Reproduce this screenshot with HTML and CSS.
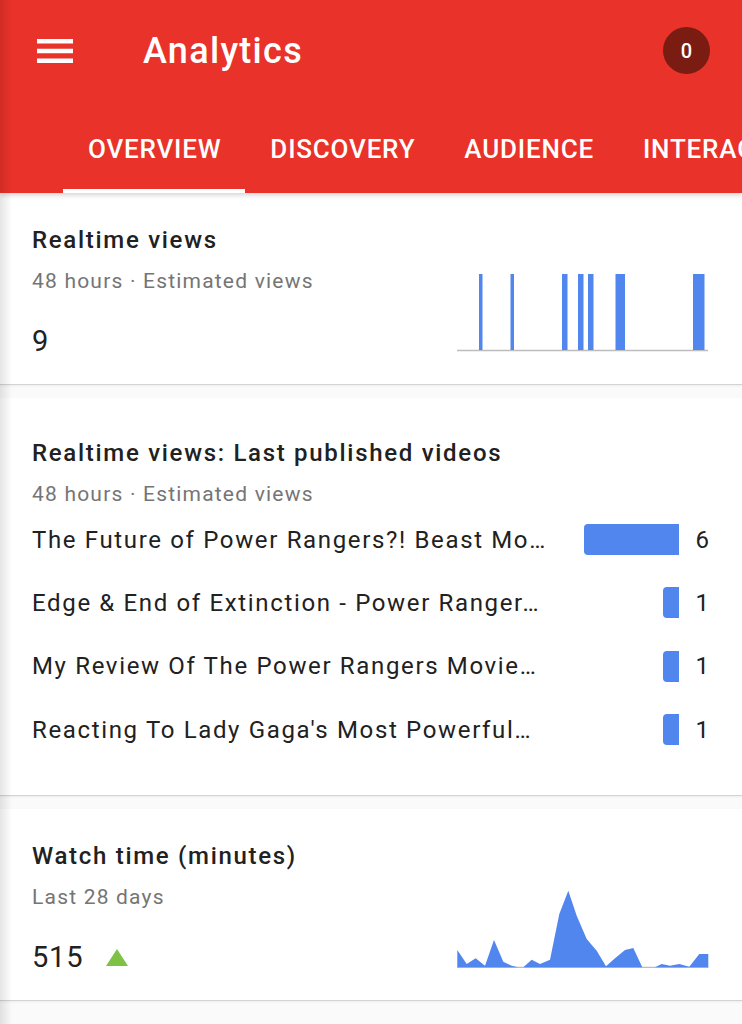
FILE: index.html
```html
<!DOCTYPE html>
<html lang="en">
<head>
    <meta charset="UTF-8">
    <meta name="viewport" content="width=device-width, initial-scale=1.0">
    <title>Analytics</title>
    <link rel="stylesheet" href="styles.css">
</head>
<body>
    <header class="appbar">
        <div class="toolbar">
            <button class="menu-btn" aria-label="Menu">
                <svg width="36" height="24" viewBox="0 0 36 24">
                    <rect x="0" y="0" width="36" height="4.5" fill="#fff"/>
                    <rect x="0" y="9.75" width="36" height="4.5" fill="#fff"/>
                    <rect x="0" y="19.5" width="36" height="4.5" fill="#fff"/>
                </svg>
            </button>
            <h1 class="title">Analytics</h1>
            <span class="badge">0</span>
        </div>
        <nav class="tabs">
            <a class="tab active">OVERVIEW</a>
            <a class="tab">DISCOVERY</a>
            <a class="tab">AUDIENCE</a>
            <a class="tab">INTERACTION</a>
        </nav>
    </header>

    <main class="content">
        <!-- Realtime -->
        <section class="card">
            <div class="card-main">
                <div class="card-text">
                    <h2 class="card-title">Realtime views</h2>
                    <p class="card-sub">48 hours · Estimated views</p>
                    <div class="card-value">9</div>
                </div>
                <svg class="spark" width="252" height="78" viewBox="0 0 252 78">
                    <line x1="0" y1="76.5" x2="251" y2="76.5" stroke="#bdbdbd" stroke-width="1.5"/>
                    <g fill="#5186ef">
                        <rect x="22" y="0" width="3.5" height="76"/>
                        <rect x="53.5" y="0" width="3.5" height="76"/>
                        <rect x="105" y="0" width="5.5" height="76"/>
                        <rect x="121" y="0" width="5.5" height="76"/>
                        <rect x="131" y="0" width="5.5" height="76"/>
                        <rect x="158.5" y="0" width="9.5" height="76"/>
                        <rect x="236" y="0" width="11.5" height="76"/>
                    </g>
                </svg>
            </div>
        </section>

        <!-- Last published videos -->
        <section class="card card-videos">
            <h2 class="card-title">Realtime views: Last published videos</h2>
            <p class="card-sub">48 hours · Estimated views</p>
            <ul class="video-list">
                <li class="video-row">
                    <span class="video-title">The Future of Power Rangers?! Beast Mo…</span>
                    <span class="bar-wrap"><span class="bar" style="width: 95px"></span></span>
                    <span class="video-value">6</span>
                </li>
                <li class="video-row">
                    <span class="video-title">Edge &amp; End of Extinction - Power Ranger…</span>
                    <span class="bar-wrap"><span class="bar" style="width: 16px"></span></span>
                    <span class="video-value">1</span>
                </li>
                <li class="video-row">
                    <span class="video-title">My Review Of The Power Rangers Movie…</span>
                    <span class="bar-wrap"><span class="bar" style="width: 16px"></span></span>
                    <span class="video-value">1</span>
                </li>
                <li class="video-row">
                    <span class="video-title">Reacting To Lady Gaga's Most Powerful…</span>
                    <span class="bar-wrap"><span class="bar" style="width: 16px"></span></span>
                    <span class="video-value">1</span>
                </li>
            </ul>
        </section>

        <!-- Watch time -->
        <section class="card">
            <div class="card-main">
                <div class="card-text">
                    <h2 class="card-title">Watch time (minutes)</h2>
                    <p class="card-sub">Last 28 days</p>
                    <div class="card-value">515 <span class="trend-up"></span></div>
                </div>
                <svg class="spark spark-area" width="252" height="81" viewBox="0 0 252 81">
                    <line x1="0" y1="80.5" x2="251.5" y2="80.5" stroke="#bdbdbd" stroke-width="1.5"/>
                    <polygon fill="#5186ef" points="0.3,80.3 0.3,63 9.7,77 18.7,71.3 28,78.7 37,53 46.3,74.7 54.7,78.7 61.3,80.3 66.3,80.3 74.7,72.7 83,77 93,72.7 102.3,27 111.3,3.7 119.7,28.7 129.7,52 139.7,63.7 149,79.3 158,71.3 168,63 176.3,61 185.3,80.3 198,80.3 204.7,77 213,78.7 222.3,77 232.3,79.7 242.3,67 251.3,67 251.3,80.3"/>
                </svg>
            </div>
        </section>
    </main>
</body>
</html>
```

FILE: styles.css
```css
* {
    margin: 0;
    padding: 0;
    box-sizing: border-box;
}

body {
    font-family: Roboto, 'Noto Sans', 'Liberation Sans', sans-serif;
    background: #fafafa;
    color: #212121;
    min-height: 100vh;
}

/* soft edge shadow along the left side */
body::before {
    content: '';
    position: fixed;
    top: 0;
    bottom: 0;
    left: 0;
    width: 12px;
    background: linear-gradient(to right, rgba(0,0,0,0.1), rgba(0,0,0,0));
    pointer-events: none;
    z-index: 10;
}

.appbar {
    background: #e9322a;
    color: #fff;
    box-shadow: 0 2px 5px rgba(0,0,0,0.18);
    position: relative;
    z-index: 2;
}

.toolbar {
    height: 101px;
    display: flex;
    align-items: center;
    padding: 0 32px 0 37px;
}

.menu-btn {
    background: none;
    border: none;
    width: 36px;
    height: 24px;
    display: flex;
}

.title {
    flex: 1;
    margin-left: 70px;
    font-size: 36px;
    line-height: 40px;
    font-weight: 500;
    letter-spacing: 1.3px;
}

.badge {
    width: 47px;
    height: 47px;
    border-radius: 50%;
    background: #7b1c12;
    color: #fff;
    font-size: 20px;
    font-weight: 500;
    display: flex;
    align-items: center;
    justify-content: center;
}

.tabs {
    display: flex;
    padding-left: 63px;
    white-space: nowrap;
    overflow: hidden;
}

.tab {
    height: 92px;
    padding: 8px 24px 0 25px;
    border-bottom: 4px solid transparent;
    display: flex;
    align-items: center;
    font-size: 26px;
    line-height: 30px;
    font-weight: 500;
    letter-spacing: 0.8px;
    color: #fff;
}

.tab.active {
    border-bottom-color: #fff;
}

.content {
    display: flex;
    flex-direction: column;
    gap: 13px;
}

.card {
    background: #fff;
    padding: 31px 33px 25px 32px;
    border-bottom: 1px solid #d4d4d4;
    box-shadow: 0 1px 2px rgba(0,0,0,0.06);
}

.card-videos {
    padding-top: 39px;
    padding-bottom: 34px;
}

.card-main {
    display: flex;
    justify-content: space-between;
    align-items: flex-end;
}

.card-title {
    font-size: 24px;
    line-height: 32px;
    font-weight: 500;
    letter-spacing: 1.7px;
    color: #212121;
}

.card-sub {
    margin-top: 11px;
    font-size: 21px;
    line-height: 28px;
    letter-spacing: 1.2px;
    color: #757575;
}

.card-value {
    margin-top: 28px;
    font-size: 29px;
    line-height: 36px;
    letter-spacing: 0.8px;
    color: #212121;
    display: flex;
    align-items: center;
}

.trend-up {
    margin-left: 23px;
    width: 0;
    height: 0;
    border-left: 11px solid transparent;
    border-right: 11px solid transparent;
    border-bottom: 17px solid #7dc243;
}

.spark {
    display: block;
    margin-bottom: 7px;
}

.video-list {
    list-style: none;
}

.video-row {
    height: 63.33px;
    display: flex;
    align-items: center;
}

.video-title {
    flex: 1;
    min-width: 0;
    font-size: 24px;
    letter-spacing: 1.65px;
    white-space: nowrap;
    overflow: hidden;
    text-overflow: ellipsis;
    color: #212121;
}

.bar-wrap {
    width: 120px;
    display: flex;
    justify-content: flex-end;
}

.bar {
    height: 31px;
    background: #5186ef;
    border-radius: 4px 0 0 4px;
}

.video-value {
    width: 30px;
    text-align: right;
    font-size: 24px;
    color: #212121;
}
```
